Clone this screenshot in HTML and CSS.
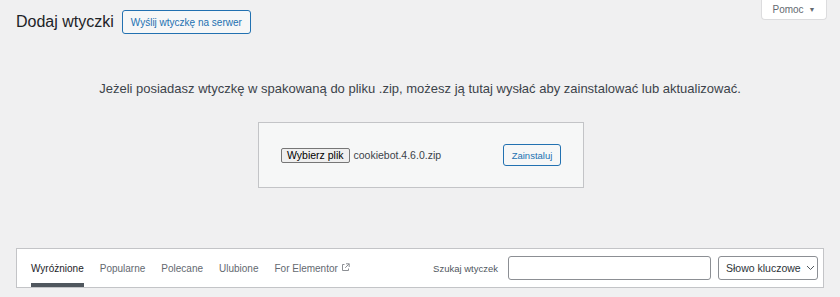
FILE: index.html
```html
<!DOCTYPE html>
<html lang="pl">
<head>
<meta charset="utf-8">
<link rel="stylesheet" href="styles.css">
</head>
<body>
<div class="top">
  <div class="heading">
    <h1 class="title">Dodaj wtyczki</h1>
    <a class="page-action">Wyślij wtyczkę na serwer</a>
  </div>
  <div class="help-tab">Pomoc <span class="caret">▼</span></div>
</div>
<p class="install-help">Jeżeli posiadasz wtyczkę w spakowaną do pliku .zip, możesz ją tutaj wysłać aby zainstalować lub aktualizować.</p>
<div class="upload-wrap">
  <div class="upload-box">
    <div class="file">
      <span class="file-btn">Wybierz plik</span>
      <span class="file-name">cookiebot.4.6.0.zip</span>
    </div>
    <span class="install-btn">Zainstaluj</span>
  </div>
</div>
<div class="filter-bar">
  <ul class="tabs">
    <li class="tab current">Wyróżnione</li>
    <li class="tab">Popularne</li>
    <li class="tab">Polecane</li>
    <li class="tab">Ulubione</li>
    <li class="tab">For Elementor <svg class="ext" width="9" height="9" viewBox="0 0 9 9"><path d="M3.5 1.5H1.5v6h6v-2" fill="none" stroke="#8c8f94" stroke-width="1"/><path d="M5 0.8h3.2V4M8.2 0.8 4.2 4.8" fill="none" stroke="#8c8f94" stroke-width="1"/></svg></li>
  </ul>
  <div class="search">
    <label class="search-label">Szukaj wtyczek</label>
    <span class="search-input"></span>
    <span class="select">Słowo kluczowe <svg class="chev" width="9" height="6" viewBox="0 0 9 6"><path d="M1 1l3.5 3.5L8 1" fill="none" stroke="#50575e" stroke-width="1"/></svg></span>
  </div>
</div>
</body>
</html>
```
FILE: styles.css
```css
html, body {
  margin: 0;
  padding: 0;
  background: #f0f0f1;
  font-family: "Liberation Sans", Arial, sans-serif;
  color: #3c434a;
}
.top {
  display: flex;
  justify-content: space-between;
  align-items: flex-start;
  padding: 0 13px 0 16px;
  height: 55px;
}
.heading {
  display: flex;
  align-items: center;
  gap: 8px;
  padding-top: 10px;
}
.title {
  margin: 0;
  font-size: 16px;
  font-weight: 400;
  color: #1d2327;
  line-height: 24px;
}
.page-action {
  display: inline-flex;
  align-items: center;
  box-sizing: border-box;
  height: 24px;
  padding: 0 8px;
  border: 1px solid #2271b1;
  border-radius: 3px;
  background: #f6f7f7;
  color: #2271b1;
  font-size: 10px;
}
.help-tab {
  box-sizing: border-box;
  width: 66px;
  height: 20px;
  background: #fff;
  border: 1px solid #dcdcde;
  border-top: none;
  border-radius: 0 0 4px 4px;
  color: #646970;
  font-size: 10px;
  display: flex;
  align-items: center;
  justify-content: center;
  gap: 5px;
}
.caret {
  font-size: 7px;
  color: #646970;
}
.install-help {
  margin: 26px 0 0;
  text-align: center;
  font-size: 13px;
  line-height: 16px;
  color: #3c434a;
}
.upload-wrap {
  display: flex;
  justify-content: center;
  padding: 25px 0 0 2px;
}
.upload-box {
  box-sizing: border-box;
  width: 326px;
  height: 66px;
  background: #f6f7f7;
  border: 1px solid #c3c4c7;
  display: flex;
  align-items: center;
  justify-content: space-between;
  padding: 0 22px 0 22px;
}
.file {
  display: flex;
  align-items: center;
  gap: 4px;
}
.file-btn {
  box-sizing: border-box;
  height: 15px;
  padding: 0 5px;
  background: #efefef;
  border: 1px solid #767676;
  border-radius: 2px;
  font-size: 10.5px;
  line-height: 13px;
  color: #000;
}
.file-name {
  font-size: 10.5px;
  color: #3c434a;
}
.install-btn {
  box-sizing: border-box;
  height: 22px;
  width: 58px;
  display: inline-flex;
  align-items: center;
  justify-content: center;
  border: 1px solid #2271b1;
  border-radius: 3px;
  color: #2271b1;
  background: #f6f7f7;
  font-size: 9.5px;
}
.filter-bar {
  box-sizing: border-box;
  margin: 60px 16px 0;
  height: 40px;
  background: #fff;
  border: 1px solid #c3c4c7;
  display: flex;
  justify-content: space-between;
  align-items: stretch;
  padding: 0 5px 0 14px;
}
.tabs {
  list-style: none;
  margin: 0;
  padding: 0;
  display: flex;
  gap: 16px;
}
.tab {
  display: flex;
  align-items: center;
  font-size: 10px;
  color: #646970;
  box-sizing: border-box;
  border-bottom: 4px solid transparent;
  padding-top: 4px;
  white-space: nowrap;
}
.tab.current {
  color: #1d2327;
  font-weight: 500;
  border-bottom-color: #50575e;
}
.ext {
  margin-left: 3px;
  margin-bottom: 2px;
}
.search {
  display: flex;
  align-items: center;
  gap: 7px;
}
.search-label {
  font-size: 9.5px;
  color: #50575e;
  margin-right: 3px;
  white-space: nowrap;
}
.search-input {
  box-sizing: border-box;
  width: 203px;
  height: 24px;
  background: #fff;
  border: 1px solid #8c8f94;
  border-radius: 3px;
}
.select {
  box-sizing: border-box;
  width: 100px;
  height: 24px;
  background: #fff;
  border: 1px solid #8c8f94;
  border-radius: 3px;
  display: flex;
  align-items: center;
  gap: 5px;
  padding-left: 7px;
  font-size: 10.5px;
  color: #2c3338;
  white-space: nowrap;
}
```
